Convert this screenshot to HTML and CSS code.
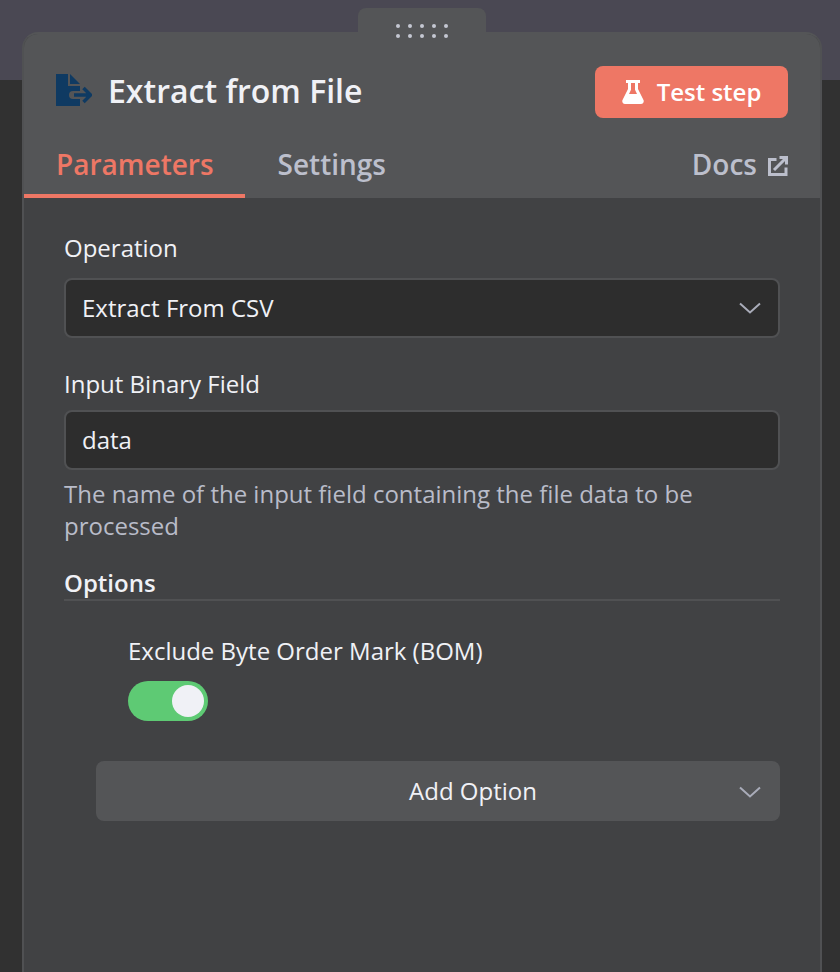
FILE: index.html
```html
<!DOCTYPE html>
<html lang="en">
<head>
<meta charset="utf-8">
<title>Extract from File</title>
<link rel="stylesheet" href="styles.css">
</head>
<body>
<main class="panel">
  <div class="handle" aria-hidden="true">
    <span class="dots"><i></i><i></i><i></i><i></i><i></i><i></i><i></i><i></i><i></i><i></i></span>
  </div>
  <header class="head">
    <div class="title-row">
      <div class="title-group">
        <svg class="node-icon" viewBox="0 0 36 32" aria-hidden="true">
          <path class="file" d="M0 0H12V12H24V17H17A4 4 0 0 0 17 25H24V32H0Z"/>
          <path class="file" d="M14 0L24 10H14Z"/>
          <path class="arrow" d="M18 21H34M27.500 14L34.500 21L27.500 28"/>
        </svg>
        <h1 class="title">Extract from File</h1>
      </div>
      <button class="test-btn" type="button">
        <svg class="flask" viewBox="0 0 22 24" aria-hidden="true">
          <path d="M4 0H18V3H16V9L21.500 20C22.300 22 21 24 19 24H3C1 24 -.3 22 .5 20L6 9V3H4ZM9 3V9.800L7 14H15L13 9.800V3Z"/>
        </svg>
        <span>Test step</span>
      </button>
    </div>
    <nav class="tabs">
      <a class="tab active">Parameters</a>
      <a class="tab">Settings</a>
      <a class="tab docs">Docs
        <svg class="ext" viewBox="0 0 20 20" aria-hidden="true">
          <path d="M8.500 3.500H1.500V18.500H18V11.500M6 14L18 2M11.500 1.500H18.500V8.500"/>
        </svg>
      </a>
    </nav>
  </header>
  <section class="body">
    <label class="label">Operation</label>
    <div class="field select">
      <span>Extract From CSV</span>
      <svg class="chev" viewBox="0 0 22 12" aria-hidden="true"><path d="M1 1.500L11 10.500L21 1.500"/></svg>
    </div>
    <label class="label second">Input Binary Field</label>
    <div class="field"><span>data</span></div>
    <p class="hint">The name of the input field containing the file data to be processed</p>
    <div class="options-head">Options</div>
    <div class="option">
      <div class="option-label">Exclude Byte Order Mark (BOM)</div>
      <div class="switch"><span class="knob"></span></div>
    </div>
    <button class="add" type="button">
      <span>Add Option</span>
      <svg class="chev" viewBox="0 0 22 12" aria-hidden="true"><path d="M1 1.500L11 10.500L21 1.500"/></svg>
    </button>
  </section>
</main>
</body>
</html>
```
FILE: styles.css
```css
* { box-sizing: border-box; }
html, body { height: 100%; }
body {
  margin: 0;
  height: 972px;
  overflow: hidden;
  padding: 32px 18px 0 22px;
  background: linear-gradient(#4a4853 0 80px, #313131 80px);
  font-family: "Open Sans", sans-serif;
  color: #f0f1f6;
}
.panel {
  position: relative;
  height: 940px;
  border: 2px solid #505153;
  border-top-color: #545557;
  border-bottom: 0;
  border-radius: 16px 16px 0 0;
  background: #414244;
}
.handle {
  position: absolute;
  top: -26px;
  left: 334px;
  width: 128px;
  height: 26px;
  display: flex;
  justify-content: center;
  padding-top: 16px;
  background: #545557;
  border-radius: 8px 8px 0 0;
}
.dots { display: grid; grid-template-columns: repeat(5, 4px); grid-auto-rows: 4px; gap: 6px 8px; height: 14px; }
.dots i { width: 4px; height: 4px; border-radius: 50%; background: #c4c7d2; }
.head {
  height: 164px;
  background: #545557;
  border-radius: 14px 14px 0 0;
  display: flex;
  flex-direction: column;
}
.title-row {
  display: flex;
  justify-content: space-between;
  align-items: center;
  height: 52px;
  margin-top: 32px;
  padding: 0 32px;
}
.title-group { display: flex; align-items: center; gap: 16px; }
.node-icon { width: 36px; height: 32px; margin-top: -4px; }
.file { fill: #0f3a62; }
.arrow { fill: none; stroke: #0f3a62; stroke-width: 3.500; }
.title { margin: -2px 0 0; font-size: 32px; font-weight: 600; line-height: 40px; color: #f0f1f6; }
.test-btn {
  display: flex;
  align-items: center;
  justify-content: center;
  gap: 13px;
  width: 193px;
  height: 52px;
  border: 0;
  border-radius: 8px;
  background: #ee7765;
  color: #fff;
  font: 600 24px "Open Sans", sans-serif;
}
.test-btn span { margin-top: -2px; }
.flask { width: 22px; height: 24px; fill: #fff; }
.tabs { display: flex; gap: 33px; margin-top: auto; padding: 0 32px 0 0; height: 62px; }
.tab {
  padding: 9px 31px 0 32px;
  height: 62px;
  font-size: 28px;
  font-weight: 600;
  line-height: 38px;
  color: #bcbfcc;
  border-bottom: 4px solid transparent;
}
.tab.active { color: #ee7765; border-bottom-color: #ee7765; }
.tabs .tab:nth-child(2) { padding: 9px 0 0; }
.tab.docs { margin-left: auto; padding: 9px 0 0; display: flex; gap: 11px; align-items: flex-start; }
.ext { width: 20px; height: 20px; margin-top: 11px; fill: none; stroke: #bcbfcc; stroke-width: 3; }
.body { padding: 32px 40px 0; }
.label { display: block; font-size: 24px; line-height: 36px; color: #f0f1f6; }
.second { margin-top: 28px; }
.field {
  display: flex;
  align-items: center;
  justify-content: space-between;
  height: 60px;
  margin-top: 12px;
  padding: 0 16px;
  background: #2d2d2d;
  border: 2px solid #505153;
  border-radius: 8px;
  font-size: 24px;
  color: #f0f1f6;
}
.field span, .add span { margin-top: -2px; }
.second + .field { margin-top: 8px; }
.chev { width: 22px; height: 12px; fill: none; stroke: #a9acb9; stroke-width: 2; }
.select .chev { margin-right: 1px; }
.hint { margin: 8px 0 0; font-size: 24px; line-height: 32px; color: #b9bcc9; }
.options-head {
  margin-top: 25px;
  height: 34px;
  font-size: 24px;
  font-weight: 600;
  line-height: 32px;
  border-bottom: 2px solid #505153;
}
.option { padding: 32px 0 0 64px; }
.option-label { font-size: 24px; line-height: 36px; }
.switch {
  display: flex;
  justify-content: flex-end;
  align-items: center;
  width: 80px;
  height: 40px;
  margin-top: 12px;
  padding-right: 4px;
  border-radius: 20px;
  background: #5eca74;
}
.knob { width: 32px; height: 32px; border-radius: 50%; background: #f0f1f6; }
.add {
  position: relative;
  display: flex;
  align-items: center;
  justify-content: center;
  width: 684px;
  height: 60px;
  margin: 40px 0 0 32px;
  padding: 0 0 0 70px;
  border: 0;
  border-radius: 8px;
  background: #545557;
  color: #f0f1f6;
  font: 24px "Open Sans", sans-serif;
}
.add .chev { position: absolute; right: 19px; top: 25px; }
```
